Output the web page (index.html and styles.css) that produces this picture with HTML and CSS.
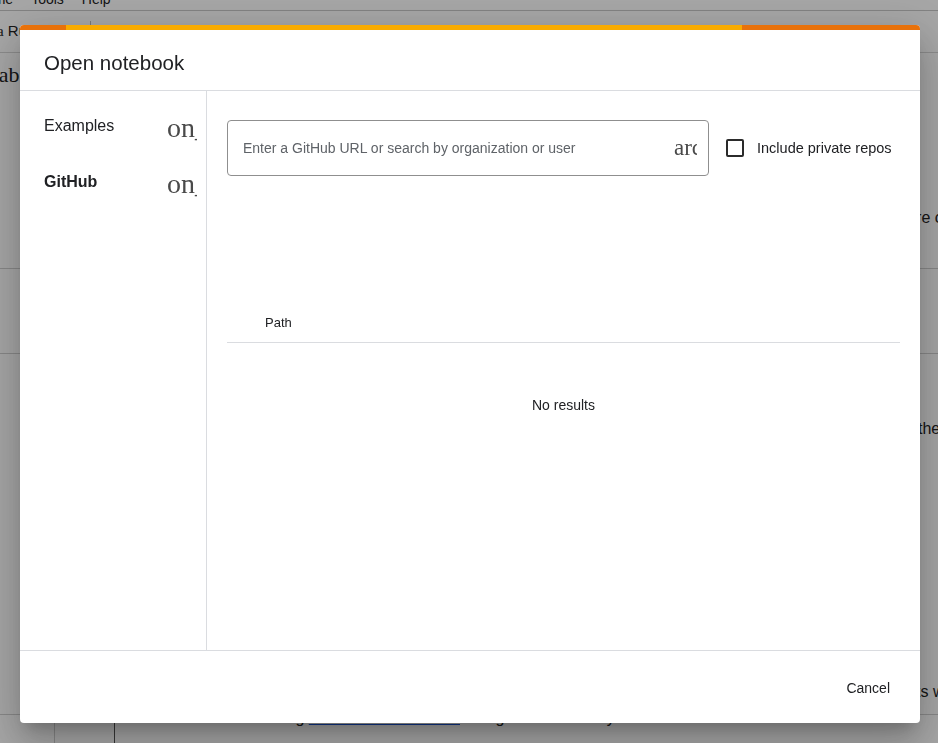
FILE: index.html
```html
<!DOCTYPE html>
<html lang="en">
<head>
<meta charset="utf-8">
<title>Open notebook</title>
<link rel="stylesheet" href="styles.css">
</head>
<body>
<div class="page">
  <div class="menubar">
    <div class="menubar-inner">
      <span>Runtime</span><span>Tools</span><span>Help</span>
    </div>
  </div>
  <div class="toolbar">
    <span class="tb-item"><span class="serif">a</span> Run all</span>
    <span class="tb-sep"></span>
    <span class="tb-item">Code</span>
  </div>
  <div class="nb">
    <div class="cell cell-a">
      <div class="title"><span class="serif">Colab</span></div>
      <p class="frag frag-a">These notebooks are collaborative and shared</p>
    </div>
    <div class="cell cell-b"></div>
    <div class="cell cell-c">
      <p class="frag frag-c">then run the cells below to see what happens</p>
      <p class="frag frag-d">Notebooks will be saved in your drive</p>
      <div class="last-row">
        <span class="gutter g1"></span>
        <span class="gutter g2"></span>
        <p class="last-text">Read more about using <a href="#">Colab documentation</a> and get started today</p>
      </div>
    </div>
  </div>
</div>

<div class="scrim"></div>

<div class="dialog" role="dialog" aria-label="Open notebook">
  <div class="progress"><span class="p1"></span><span class="p2"></span><span class="p3"></span></div>
  <div class="dlg-header"><h2>Open notebook</h2></div>
  <div class="dlg-body">
    <nav class="dlg-nav">
      <div class="nav-item"><span class="nav-label">Examples</span><span class="icon-text"><span>on_</span></span></div>
      <div class="nav-item active"><span class="nav-label">GitHub</span><span class="icon-text"><span>on_</span></span></div>
    </nav>
    <section class="dlg-main">
      <div class="search-row">
        <div class="search-field">
          <span class="placeholder">Enter a GitHub URL or search by organization or user</span>
          <span class="search-icon"><span>arch</span></span>
        </div>
        <label class="check"><span class="box"></span><span>Include private repos</span></label>
      </div>
      <div class="table">
        <div class="thead"><span>Path</span></div>
        <div class="empty">No results</div>
      </div>
    </section>
  </div>
  <div class="dlg-footer"><button class="btn">Cancel</button></div>
</div>
</body>
</html>
```

FILE: styles.css
```css
* { box-sizing: border-box; }

html, body {
  margin: 0;
  width: 938px;
  height: 743px;
  overflow: hidden;
}

body {
  font-family: "Liberation Sans", Arial, Helvetica, sans-serif;
  background: #ffffff;
  color: #202124;
}

.serif { font-family: "Liberation Serif", "Times New Roman", serif; }

/* ---------- background page ---------- */
.page {
  height: 743px;
  overflow: hidden;
}

.menubar {
  height: 11px;
  overflow: hidden;
  border-bottom: 1px solid #c8c8c8;
}

.menubar-inner {
  display: flex;
  gap: 18px;
  margin-top: -10px;
  margin-left: -39px;
  font-size: 14px;
  line-height: 18px;
  color: #222;
}

.toolbar {
  height: 42px;
  border-bottom: 1px solid #d6d6d6;
  display: flex;
  align-items: center;
  gap: 22px;
  padding-bottom: 2px;
  margin-left: -3px;
  font-size: 15px;
  color: #222;
}

.tb-sep {
  width: 1px;
  height: 12px;
  background: #bbb;
  margin-top: -8px;
  margin-left: 13px;
}

.nb { display: flex; flex-direction: column; }

.cell-a {
  height: 216px;
  border-bottom: 1px solid #d0d0d0;
}

.title {
  margin-left: -33px;
  padding-top: 9px;
  font-size: 22px;
  color: #222;
  line-height: 26px;
}

.frag {
  margin: 0;
  white-space: nowrap;
  font-size: 16px;
  color: #222;
}

.frag-a { padding-left: 780px; margin-top: 120px; line-height: 20px; }

.cell-b {
  height: 85px;
  border-bottom: 1px solid #d0d0d0;
}

.cell-c { display: flex; flex-direction: column; }

.frag-c { padding-left: 918px; margin-top: 65px; line-height: 20px; }
.frag-d { padding-left: 852px; margin-top: 243px; line-height: 20px; }

.last-row {
  display: flex;
  margin-top: 12px;
  height: 40px;
  border-top: 1px solid #d0d0d0;
}

.gutter { display: block; height: 40px; }
.g1 { width: 55px; border-right: 1px solid #cfcfcf; }
.g2 { width: 60px; border-right: 1px solid #555; }

.last-text {
  margin: -5px 0 0 23px;
  font-size: 16px;
  line-height: 16px;
  white-space: nowrap;
  color: #222;
}

.last-text a { color: #1a56db; }

.scrim {
  position: fixed;
  inset: 0;
  background: rgba(0, 0, 0, 0.35);
}

/* ---------- dialog ---------- */
.dialog {
  position: fixed;
  left: 20px;
  top: 25px;
  width: 900px;
  height: 698px;
  background: #ffffff;
  border-radius: 4px;
  overflow: hidden;
  display: flex;
  flex-direction: column;
  box-shadow: 0 11px 15px -7px rgba(0,0,0,.2), 0 24px 38px 3px rgba(0,0,0,.14), 0 9px 46px 8px rgba(0,0,0,.12);
}

.progress {
  display: flex;
  height: 5px;
  flex: none;
}
.progress .p1 { width: 46px; background: #e8710a; }
.progress .p2 { width: 676px; background: #f9ab00; }
.progress .p3 { flex: 1; background: #e8710a; }

.dlg-header {
  flex: none;
  height: 61px;
  border-bottom: 1px solid #dadce0;
  padding: 21px 24px 0;
}

.dlg-header h2 {
  margin: 0;
  font-size: 20.5px;
  font-weight: normal;
  line-height: 24px;
  color: #202124;
}

.dlg-body {
  flex: none;
  height: 560px;
  display: flex;
  border-bottom: 1px solid #dadce0;
}

.dlg-nav {
  width: 187px;
  flex: none;
  border-right: 1px solid #dadce0;
  padding-top: 7px;
}

.nav-item {
  height: 56px;
  display: flex;
  align-items: center;
  padding-left: 24px;
  font-size: 16px;
  color: #202124;
}

.nav-item.active .nav-label { font-weight: bold; }

.icon-text {
  margin-left: auto;
  margin-right: 9px;
  width: 30px;
  overflow: hidden;
  white-space: nowrap;
  font-family: "Liberation Serif", "Times New Roman", serif;
  font-size: 28px;
  line-height: 30px;
  color: #4a4a4a;
  padding-top: 4px;
}

.dlg-main {
  flex: 1;
  padding: 29px 20px 0 20px;
  display: flex;
  flex-direction: column;
}

.search-row {
  display: flex;
  align-items: center;
  gap: 17px;
}

.search-field {
  width: 482px;
  height: 56px;
  border: 1px solid #8f8f8f;
  border-radius: 4px;
  display: flex;
  align-items: center;
  padding: 0 11px 0 15px;
}

.placeholder {
  font-size: 14px;
  color: #5f6368;
}

.search-icon {
  margin-left: auto;
  width: 23px;
  overflow: hidden;
  white-space: nowrap;
  font-family: "Liberation Serif", "Times New Roman", serif;
  font-size: 23px;
  line-height: 26px;
  color: #4a4a4a;
}

.check {
  display: flex;
  align-items: center;
  gap: 13px;
  font-size: 14.5px;
  color: #202124;
}

.box {
  width: 18px;
  height: 18px;
  border: 2px solid #2b2b2b;
  border-radius: 2px;
}

.table {
  margin-top: 126px;
  display: flex;
  flex-direction: column;
}

.thead {
  height: 41px;
  border-bottom: 1px solid #dadce0;
  padding-left: 38px;
  display: flex;
  align-items: center;
  font-size: 13px;
  color: #202124;
}

.empty {
  padding-top: 53px;
  text-align: center;
  font-size: 14px;
  line-height: 18px;
  color: #202124;
}

.dlg-footer {
  flex: 1;
  display: flex;
  align-items: center;
  justify-content: flex-end;
  padding: 2px 22px 0 0;
}

.btn {
  border: none;
  background: none;
  padding: 8px;
  font-family: inherit;
  font-size: 14px;
  color: #202124;
}
```
